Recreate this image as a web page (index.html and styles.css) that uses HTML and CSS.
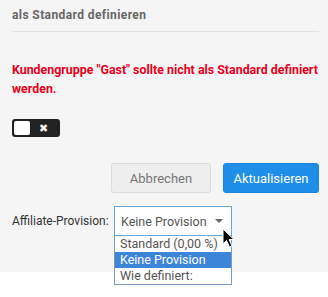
FILE: index.html
```html
<!DOCTYPE html>
<html lang="de">
<head>
    <meta charset="UTF-8">
    <title>Kundengruppe</title>
    <link rel="stylesheet" href="styles.css">
</head>
<body>
    <div class="panel">
        <div class="panel-head">als Standard definieren</div>

        <p class="error">Kundengruppe "Gast" sollte nicht als Standard definiert werden.</p>

        <div class="switch">
            <span class="knob"></span>
            <span class="cross">&#10006;</span>
        </div>

        <div class="actions">
            <button class="btn">Abbrechen</button>
            <button class="btn btn-primary">Aktualisieren</button>
        </div>

        <div class="field">
            <label class="field-label">Affiliate-Provision:</label>
            <div class="select-wrap">
                <div class="select">
                    <span>Keine Provision</span>
                    <span class="caret"></span>
                </div>
                <ul class="options">
                    <li>Standard (0,00 %)</li>
                    <li class="active">Keine Provision</li>
                    <li>Wie definiert:</li>
                </ul>
                <svg class="cursor" width="14" height="21" viewBox="0 0 14 21">
                    <path d="M1 1 L1 16 L4.5 12.5 L7.5 19 L10 18 L7 11.5 L12 11.5 Z" fill="#000" stroke="#fff" stroke-width="1"/>
                </svg>
            </div>
        </div>
    </div>
</body>
</html>
```

FILE: styles.css
```css
body {
    margin: 0;
    min-height: 297px;
    background: #fff;
    font-family: Roboto, "Liberation Sans", Arial, sans-serif;
}
.panel {
    background: #f5f5f5;
    padding: 0 9px 36px 12px;
}
.panel-head {
    font-size: 12px;
    font-weight: bold;
    letter-spacing: 0.4px;
    line-height: 14px;
    color: #666;
    padding: 8px 0 9px;
    border-bottom: 1px solid #e2e2e2;
}
.error {
    margin: 28px 0 0;
    font-size: 12.4px;
    font-weight: bold;
    line-height: 19px;
    color: #e8001c;
}
.switch {
    margin-top: 21px;
    width: 48px;
    height: 18px;
    background: #222;
    border-radius: 3px;
    display: flex;
    align-items: center;
    padding: 0 2px;
    box-sizing: border-box;
}
.knob {
    width: 16px;
    height: 14px;
    background: #fff;
    border-radius: 2px;
}
.cross {
    color: #fff;
    font-size: 11px;
    font-weight: bold;
    margin-left: 9px;
    font-family: "DejaVu Sans", sans-serif;
}
.actions {
    margin-top: 26px;
    display: flex;
    justify-content: flex-end;
    gap: 12px;
}
.btn {
    height: 30px;
    width: 100px;
    font-family: inherit;
    font-size: 13px;
    color: #777;
    background: #eeeeee;
    border: 1px solid #dcdcdc;
    border-radius: 3px;
}
.btn-primary {
    width: 96px;
    color: #fff;
    background: #1e8ee8;
    border-color: #1a84da;
}
.field {
    margin-top: 13px;
    display: flex;
    align-items: center;
}
.field-label {
    width: 102px;
    flex-shrink: 0;
    white-space: nowrap;
    font-size: 12px;
    color: #333;
}
.select-wrap {
    position: relative;
    z-index: 2;
}
.select {
    width: 118px;
    height: 30px;
    box-sizing: border-box;
    border: 1px solid #6aa6d6;
    background: #fff;
    display: flex;
    align-items: center;
    justify-content: space-between;
    padding: 0 8px 0 6px;
    font-size: 12.5px;
    color: #555;
}
.caret {
    border-left: 4px solid transparent;
    border-right: 4px solid transparent;
    border-top: 4px solid #666;
}
.options {
    position: absolute;
    top: 30px;
    left: 0;
    width: 118px;
    box-sizing: border-box;
    margin: 0;
    padding: 0;
    list-style: none;
    background: #fff;
    border: 1px solid #7a9cc0;
    border-top: none;
    font-size: 12.5px;
    color: #555;
}
.options li {
    height: 16px;
    line-height: 16px;
    padding-left: 5px;
}
.options li.active {
    background: #3d85d8;
    color: #fff;
}
.cursor {
    position: absolute;
    left: 108px;
    top: 22px;
}
```
